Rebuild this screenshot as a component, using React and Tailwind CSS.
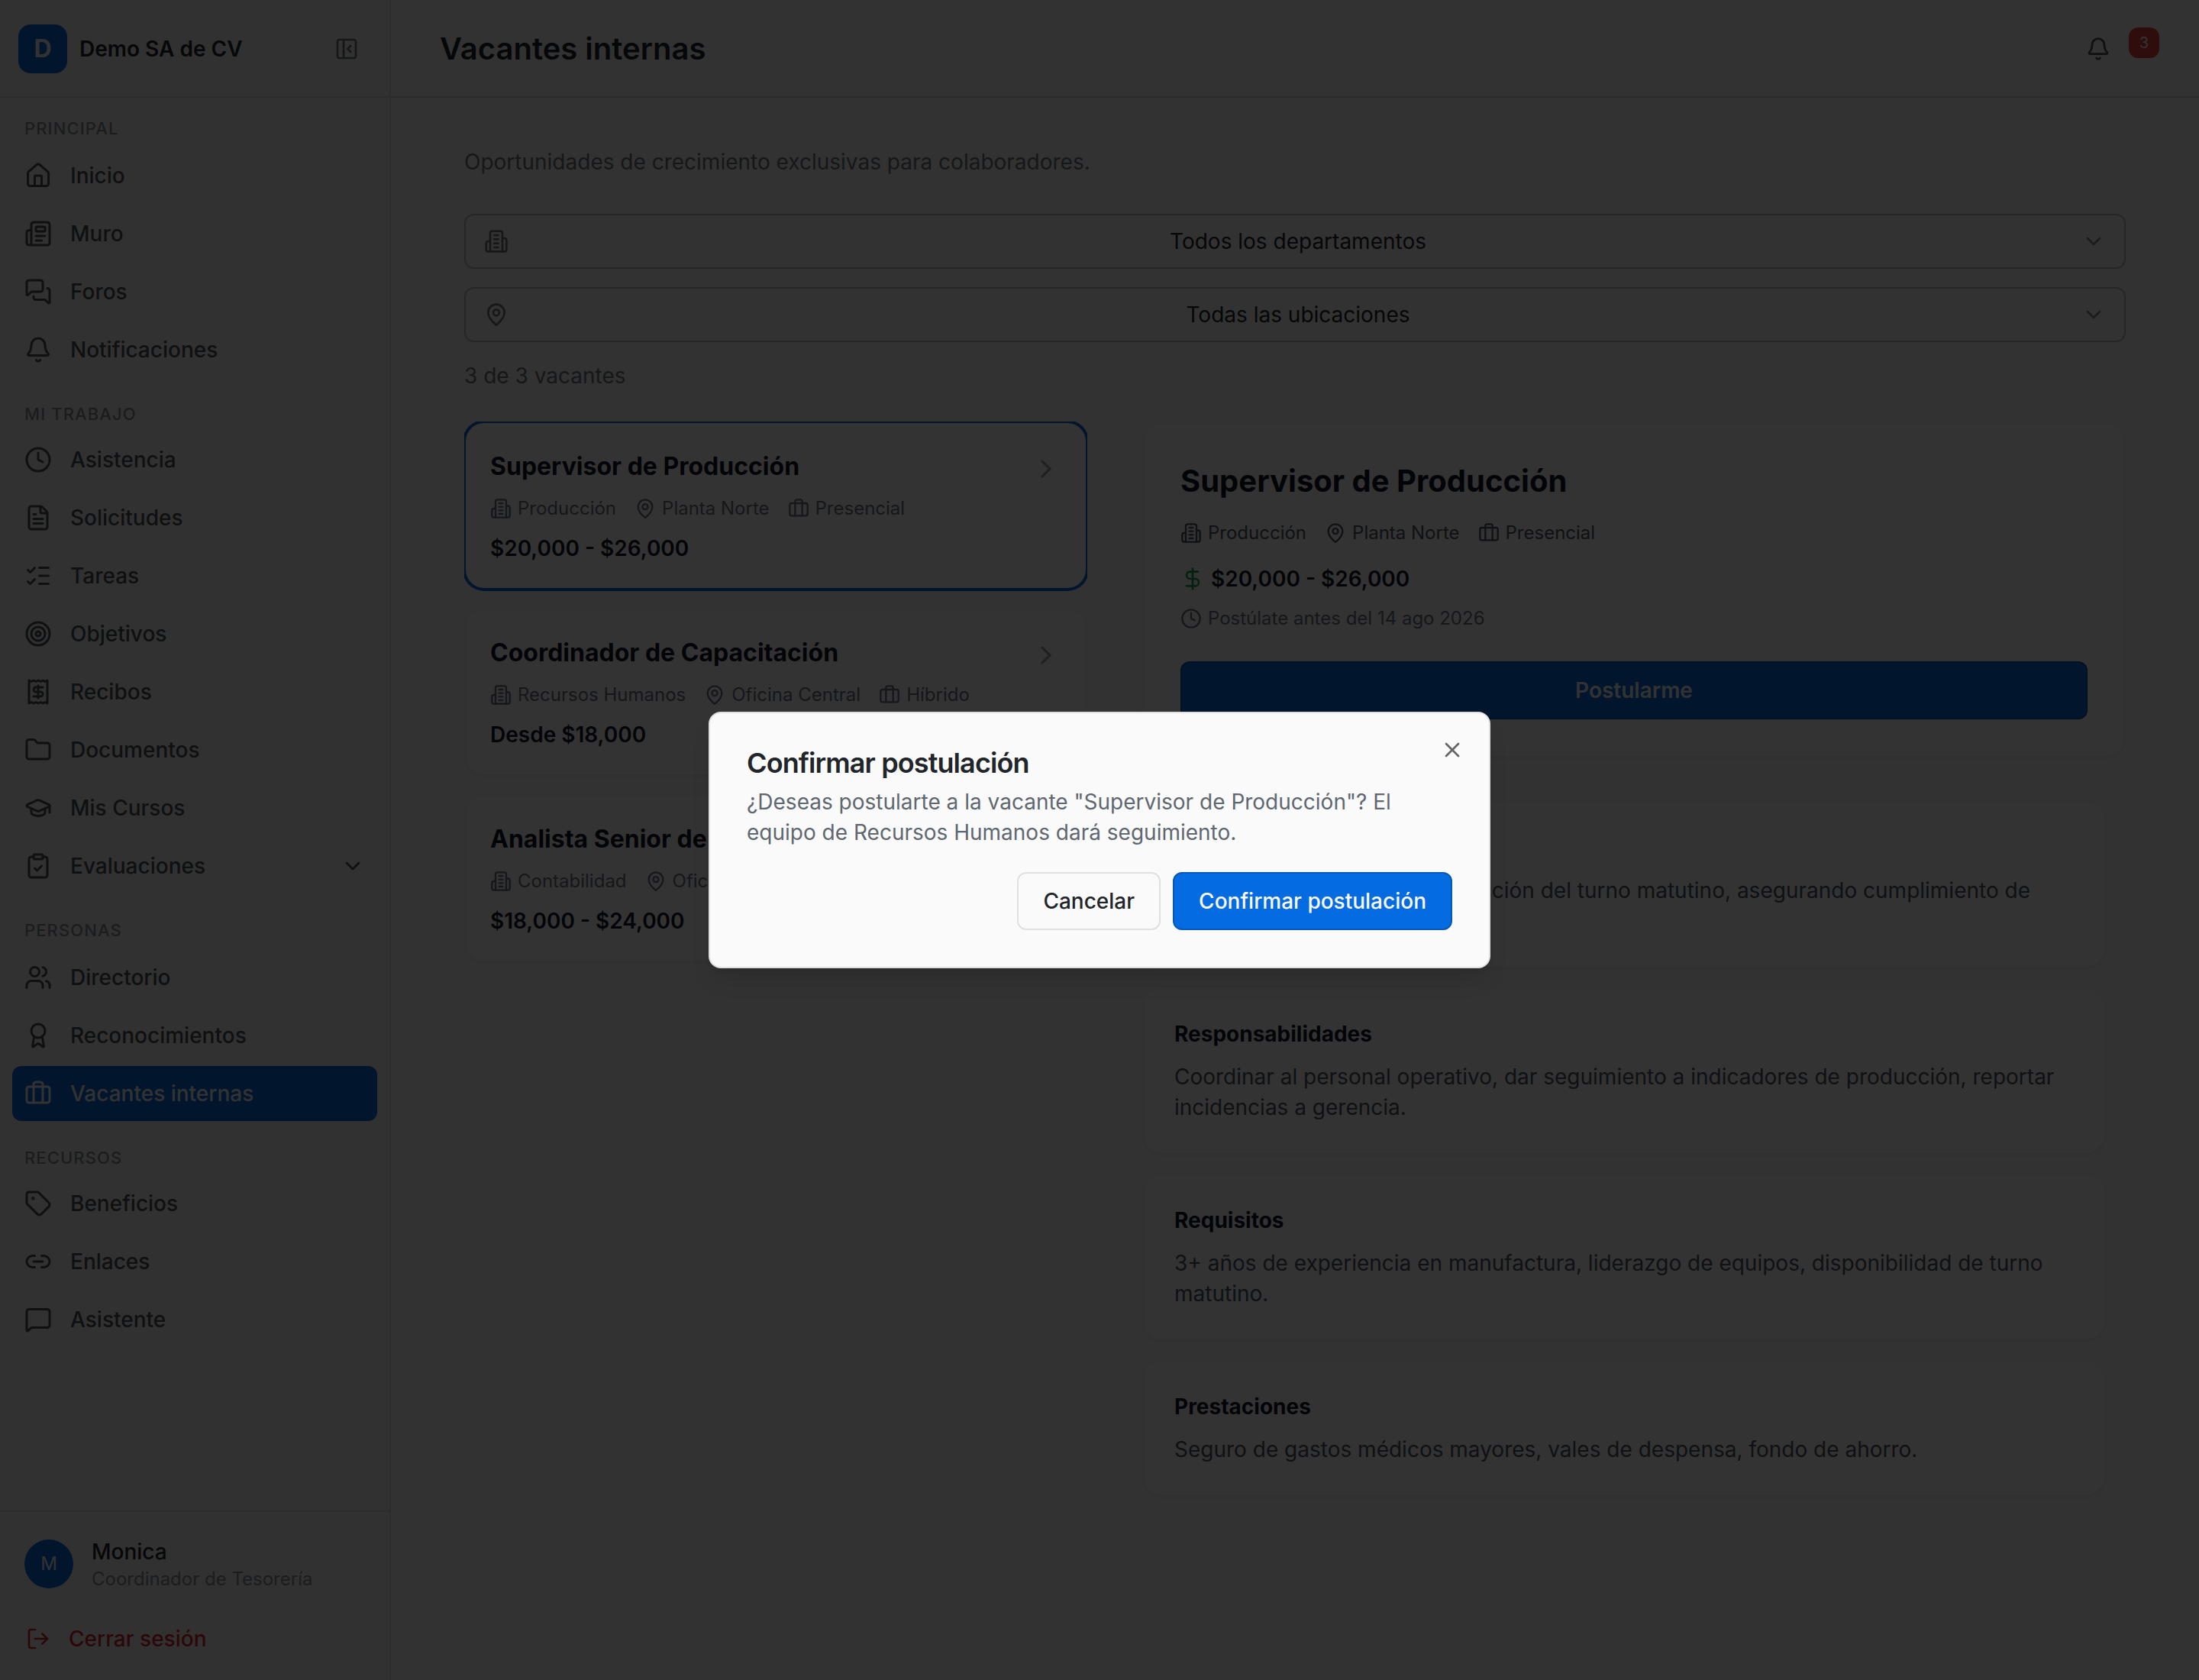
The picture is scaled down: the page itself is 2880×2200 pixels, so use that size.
import React from 'react'
import {
  Award,
  Bell,
  Briefcase,
  ChevronDown,
  ChevronRight,
  ClipboardCheck,
  Clock,
  DollarSign,
  FileText,
  Folder,
  GraduationCap,
  House,
  Link2,
  ListChecks,
  LogOut,
  MapPin,
  MessageSquare,
  MessagesSquare,
  Newspaper,
  PanelLeftClose,
  Tag,
  Target,
  Users,
  X,
} from 'lucide-react'

// Icons whose strokes differ from the packaged ones
const Svg = ({ className, children }) => (
  <svg
    viewBox="0 0 24 24"
    fill="none"
    stroke="currentColor"
    strokeWidth="2"
    strokeLinecap="round"
    strokeLinejoin="round"
    className={className}
  >
    {children}
  </svg>
)

const ReceiptIcon = ({ className }) => (
  <Svg className={className}>
    <path d="M4 2v20l2-1 2 1 2-1 2 1 2-1 2 1 2-1 2 1V2l-2 1-2-1-2 1-2-1-2 1-2-1-2 1Z" />
    <path d="M16 8h-6a2 2 0 1 0 0 4h4a2 2 0 1 1 0 4H8" />
    <path d="M12 17.5v-11" />
  </Svg>
)

const BuildingIcon = ({ className }) => (
  <Svg className={className}>
    <path d="M6 22V4a2 2 0 0 1 2-2h8a2 2 0 0 1 2 2v18Z" />
    <path d="M6 12H4a2 2 0 0 0-2 2v6a2 2 0 0 0 2 2h2" />
    <path d="M18 9h2a2 2 0 0 1 2 2v9a2 2 0 0 1-2 2h-2" />
    <path d="M10 6h4" />
    <path d="M10 10h4" />
    <path d="M10 14h4" />
    <path d="M10 18h4" />
  </Svg>
)

const sections = [
  {
    title: 'Principal',
    header: 'pt-[22px] pb-2',
    items: [
      { label: 'Inicio', icon: House },
      { label: 'Muro', icon: Newspaper },
      { label: 'Foros', icon: MessagesSquare },
      { label: 'Notificaciones', icon: Bell },
    ],
  },
  {
    title: 'Mi trabajo',
    header: 'pt-[30px] pb-1.5',
    items: [
      { label: 'Asistencia', icon: Clock },
      { label: 'Solicitudes', icon: FileText },
      { label: 'Tareas', icon: ListChecks },
      { label: 'Objetivos', icon: Target },
      { label: 'Recibos', icon: ReceiptIcon },
      { label: 'Documentos', icon: Folder },
      { label: 'Mis Cursos', icon: GraduationCap },
      { label: 'Evaluaciones', icon: ClipboardCheck, expandable: true },
    ],
  },
  {
    title: 'Personas',
    header: 'pt-[30px] pb-2',
    items: [
      { label: 'Directorio', icon: Users },
      { label: 'Reconocimientos', icon: Award },
      { label: 'Vacantes internas', icon: Briefcase, active: true },
    ],
  },
  {
    title: 'Recursos',
    header: 'pt-[30px] pb-1.5',
    items: [
      { label: 'Beneficios', icon: Tag },
      { label: 'Enlaces', icon: Link2 },
      { label: 'Asistente', icon: MessageSquare },
    ],
  },
]

const vacancies = [
  {
    title: 'Supervisor de Producción',
    department: 'Producción',
    location: 'Planta Norte',
    mode: 'Presencial',
    salary: '$20,000 - $26,000',
    selected: true,
  },
  {
    title: 'Coordinador de Capacitación',
    department: 'Recursos Humanos',
    location: 'Oficina Central',
    mode: 'Híbrido',
    salary: 'Desde $18,000',
  },
  {
    title: 'Analista Senior de Nómina',
    department: 'Contabilidad',
    location: 'Oficina Central',
    mode: 'Híbrido',
    salary: '$18,000 - $24,000',
  },
]

const details = [
  {
    title: 'Descripción',
    text: 'Supervisar las líneas de producción del turno matutino, asegurando cumplimiento de metas.',
  },
  {
    title: 'Responsabilidades',
    text: 'Coordinar al personal operativo, dar seguimiento a indicadores de producción, reportar incidencias a gerencia.',
  },
  {
    title: 'Requisitos',
    text: '3+ años de experiencia en manufactura, liderazgo de equipos, disponibilidad de turno matutino.',
  },
  {
    title: 'Prestaciones',
    text: 'Seguro de gastos médicos mayores, vales de despensa, fondo de ahorro.',
  },
]

const NavItem = ({ item }) => {
  const Icon = item.icon
  return (
    <a
      className={`flex h-[72px] items-center gap-6 rounded-xl px-4 text-[28px] font-medium ${
        item.active ? 'bg-[#056be0] text-[#fafafa]' : 'text-[#495057]'
      }`}
    >
      <Icon className="size-9 shrink-0" />
      <span className="flex-1">{item.label}</span>
      {item.expandable && <ChevronDown className="size-8" />}
    </a>
  )
}

const Sidebar = () => (
  <aside className="flex w-[512px] shrink-0 flex-col border-r-2 border-[#dcdcdc] bg-[#f5f5f5]">
    <div className="flex h-32 items-center border-b-2 border-[#dcdcdc] pt-0.5 pr-10 pl-6">
      <div className="flex size-16 items-center justify-center rounded-2xl bg-[#056be0] text-[32px] font-bold text-[#fafafa]">
        D
      </div>
      <span className="ml-4 flex-1 text-[28px] font-semibold text-[#212529]">Demo SA de CV</span>
      <PanelLeftClose className="size-8 text-[#6c757d]" />
    </div>

    <nav className="flex-1 px-4">
      {sections.map((section) => (
        <div key={section.title}>
          <h3
            className={`px-4 text-[22px] leading-9 font-medium tracking-[0.05em] text-[#868e96] uppercase ${section.header}`}
          >
            {section.title}
          </h3>
          <div className="flex flex-col gap-1">
            {section.items.map((item) => (
              <NavItem key={item.label} item={item} />
            ))}
          </div>
        </div>
      ))}
    </nav>

    <div className="h-[222px] border-t-2 border-[#dcdcdc] px-8 pt-[34px]">
      <div className="flex items-start gap-6">
        <div className="mt-0.5 flex size-16 items-center justify-center rounded-full bg-[#056be0] text-2xl leading-8 text-[#fafafa]">
          M
        </div>
        <div>
          <p className="text-[28px] leading-9 font-medium text-[#212529]">Monica</p>
          <p className="text-2xl leading-9 text-[#868e96]">Coordinador de Tesorería</p>
        </div>
      </div>
      <button className="mt-6 flex h-[72px] items-center gap-6 pl-0.5 text-[28px] font-medium text-[#dc2626]">
        <LogOut className="size-8" />
        Cerrar sesión
      </button>
    </div>
  </aside>
)

const SelectBox = ({ icon: Icon, label }) => (
  <button className="flex h-[72px] items-center rounded-xl border-2 border-[#bfbfbf] px-6 text-[28px] text-[#212529]">
    <Icon className="mr-4 size-8 text-[#6c757d]" />
    <span className="flex-1 text-center">{label}</span>
    <ChevronDown className="ml-2 size-8 text-[#8a8a8a]" />
  </button>
)

const Meta = ({ vacancy, className }) => (
  <div className={`flex items-center gap-6 text-2xl leading-8 ${className}`}>
    <span className="flex items-center gap-2">
      <BuildingIcon className="size-7" />
      {vacancy.department}
    </span>
    <span className="flex items-center gap-2">
      <MapPin className="size-7" />
      {vacancy.location}
    </span>
    <span className="flex items-center gap-2">
      <Briefcase className="size-7" />
      {vacancy.mode}
    </span>
  </div>
)

const VacancyCard = ({ vacancy }) => (
  <div
    className={`flex h-[216px] shrink-0 items-start justify-between rounded-3xl bg-white p-8 shadow-[0_2px_6px_rgba(0,0,0,0.08)] ${
      vacancy.selected ? 'ring-4 ring-[#056be0]' : ''
    }`}
  >
    <div>
      <h3 className="pt-px text-[32px] leading-[48px] font-bold text-[#0f172a]">{vacancy.title}</h3>
      <Meta vacancy={vacancy} className="mt-[15px] text-[#6b7280]" />
      <p className="mt-4 text-[28px] leading-10 font-semibold text-[#0f172a]">{vacancy.salary}</p>
    </div>
    <ChevronRight className="mt-2 size-10 text-[#9ca3af]" />
  </div>
)

const VacancyDetail = ({ vacancy }) => (
  <div className="flex flex-col">
    <div className="rounded-3xl bg-white p-12 shadow-[0_2px_6px_rgba(0,0,0,0.08)]">
      <h2 className="text-[40px] leading-[56px] font-bold text-[#0f172a]">{vacancy.title}</h2>
      <Meta vacancy={vacancy} className="mt-6 text-[#4b5563]" />
      <p className="mt-6 flex items-center gap-2 text-[28px] leading-10 font-semibold text-[#0f172a]">
        <DollarSign className="size-8 text-[#16a34a]" />
        {vacancy.salary}
      </p>
      <p className="mt-4 flex items-center gap-2 text-2xl leading-8 text-[#6b7280]">
        <Clock className="size-7" />
        Postúlate antes del 14 ago 2026
      </p>
      <button className="mt-10 h-[76px] w-full rounded-xl border-2 border-[#0558b8] bg-[#056be0] text-[28px] font-semibold text-[#fafafa]">
        Postularme
      </button>
    </div>

    <div className="mt-[60px] flex flex-col gap-7 pr-[26px]">
      {details.map((detail) => (
        <div key={detail.title} className="rounded-3xl bg-white p-10 shadow-[0_2px_6px_rgba(0,0,0,0.08)]">
          <h4 className="text-[28px] leading-10 font-bold text-[#0f172a]">{detail.title}</h4>
          <p className="mt-4 text-[28px] leading-10 text-[#4b5563]">{detail.text}</p>
        </div>
      ))}
    </div>
  </div>
)

const ConfirmDialog = () => (
  <div className="absolute inset-0 flex items-center justify-center bg-black/80">
    <div className="relative w-[1024px] rounded-2xl border-2 border-[#e0e0e0] bg-[#fafafa] p-12 shadow-[0_20px_30px_-6px_rgba(0,0,0,0.1),0_8px_12px_-8px_rgba(0,0,0,0.1)]">
      <h2 className="-mt-px text-4xl leading-9 font-semibold tracking-tight text-[#212529]">Confirmar postulación</h2>
      <p className="mt-[13px] text-[28px] leading-10 text-[#5f6770]">
        ¿Deseas postularte a la vacante "Supervisor de Producción"? El equipo de Recursos Humanos dará seguimiento.
      </p>
      <div className="mt-8 flex justify-end gap-4">
        <button className="h-[76px] rounded-xl border-2 border-[#e0e0e0] px-8 text-[28px] font-medium text-[#212529]">
          Cancelar
        </button>
        <button className="h-[76px] rounded-xl border-2 border-[#0558b8] bg-[#056be0] px-8 text-[28px] font-medium text-[#fafafa]">
          Confirmar postulación
        </button>
      </div>
      <X className="absolute top-8 right-8 size-8 text-[#666666]" />
    </div>
  </div>
)

const App = () => {
  return (
    <div className="relative flex h-[2200px] w-[2880px] overflow-hidden bg-[#fafafa] font-['Inter',sans-serif]">
      <Sidebar />

      <div className="flex flex-1 flex-col">
        <header className="flex h-32 items-center justify-between border-b-2 border-[#dcdcdc] pt-0.5 pr-[52px] pl-16">
          <h1 className="text-[40px] font-semibold text-[#212529]">Vacantes internas</h1>
          <div className="flex items-center gap-6">
            <Bell className="size-8 text-[#495057]" />
            <span className="mb-4 flex size-10 items-center justify-center rounded-xl bg-[#ef4444] text-xl text-[#fafafa]">
              3
            </span>
          </div>
        </header>

        <main className="flex flex-col pt-16 pr-24 pl-24">
          <p className="text-[28px] leading-10 text-[#6c757d]">
            Oportunidades de crecimiento exclusivas para colaboradores.
          </p>

          {/* Filters */}
          <div className="mt-12 flex flex-col gap-6">
            <SelectBox icon={BuildingIcon} label="Todos los departamentos" />
            <SelectBox icon={MapPin} label="Todas las ubicaciones" />
          </div>
          <p className="mt-6 text-[28px] leading-10 text-[#6c757d]">3 de 3 vacantes</p>

          <div className="mt-10 flex gap-[72px]">
            <div className="flex w-[816px] flex-col gap-7 overflow-hidden p-0.5 pb-2">
              {vacancies.map((vacancy) => (
                <VacancyCard key={vacancy.title} vacancy={vacancy} />
              ))}
            </div>
            <div className="flex-1 p-0.5">
              <VacancyDetail vacancy={vacancies[0]} />
            </div>
          </div>
        </main>
      </div>

      <ConfirmDialog />
    </div>
  )
}

export default App
